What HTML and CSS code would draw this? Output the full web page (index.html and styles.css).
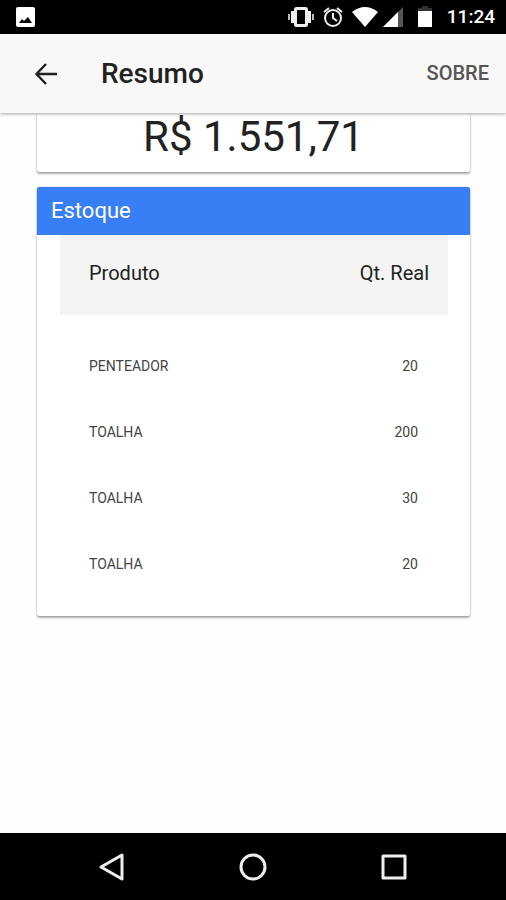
FILE: index.html
```
<!DOCTYPE html>
<html lang="pt-BR">
<head>
  <meta charset="UTF-8" />
  <meta name="viewport" content="width=device-width, initial-scale=1" />
  <title>Resumo</title>
  <link rel="stylesheet" href="styles.css">
</head>
<body>
  <div class="status-bar">
    <svg class="picture" width="20" height="20" viewBox="0 0 20 20">
      <rect width="19" height="20" rx="2" fill="#fff"/>
      <path d="M3 16l3-4 2 2 4-4 4 6z" fill="#000"/>
    </svg>
    <div class="status-icons">
      <svg width="26" height="20" viewBox="0 0 26 20" fill="none" stroke="#eee" stroke-width="2">
        <rect x="7.5" y="1.5" width="11" height="17" rx="1" stroke-width="3"/>
        <path d="M4.5 4v12M21.5 4v12" stroke-width="3"/>
        <path d="M1 7v6M25 7v6" stroke="#bbb"/>
      </svg>
      <svg class="alarm" width="20" height="20" viewBox="0 0 20 20" fill="none" stroke="#eee" stroke-width="2">
        <circle cx="10" cy="11" r="8"/>
        <path d="M1 5l5-4M19 5l-5-4M10 6v5l4 3"/>
      </svg>
      <svg class="wifi" width="26" height="20" viewBox="0 0 26 20" fill="#fff">
        <path d="M0 5Q13-5 26 5L13 20z"/>
      </svg>
      <svg class="signal" width="20" height="20" viewBox="0 0 20 20">
        <path d="M0 20L20 0v20z" fill="#555"/>
        <path d="M0 20L15 5v15z" fill="#fff"/>
      </svg>
      <svg class="battery" width="14" height="22" viewBox="0 0 14 22">
        <path d="M4 0h6v2h4v4H0V2h4z" fill="#333"/>
        <path d="M0 5h14v16H0z" fill="#fff"/>
      </svg>
      <span class="clock">11:24</span>
    </div>
  </div>

  <header class="toolbar">
    <button type="button" class="back" aria-label="Voltar">
      <svg width="24" height="24" viewBox="0 0 24 24" fill="none" stroke="#222" stroke-width="2.4">
        <path d="M23 12H3M12 2L2.500 12l9.500 10"/>
      </svg>
    </button>
    <h1>Resumo</h1>
    <button type="button" class="about">SOBRE</button>
  </header>

  <main class="content">
    <section class="card total">R$ 1.551,71</section>

    <section class="card stock">
      <h2>Estoque</h2>
      <div class="card-body">
        <table>
          <thead>
            <tr><th>Produto</th><th class="qty">Qt. Real</th></tr>
          </thead>
          <tbody>
            <tr><td>PENTEADOR</td><td class="qty">20</td></tr>
            <tr><td>TOALHA</td><td class="qty">200</td></tr>
            <tr><td>TOALHA</td><td class="qty">30</td></tr>
            <tr><td>TOALHA</td><td class="qty">20</td></tr>
          </tbody>
        </table>
      </div>
    </section>
  </main>

  <nav class="nav-bar">
    <button type="button" aria-label="Voltar">
      <svg width="28" height="28" viewBox="0 0 28 28" fill="none" stroke="#eee" stroke-width="3" stroke-linejoin="round">
        <path d="M24 2v24L3 14z"/>
      </svg>
    </button>
    <button type="button" aria-label="Início">
      <svg width="28" height="28" viewBox="0 0 28 28" fill="none" stroke="#eee" stroke-width="3">
        <circle cx="14" cy="14" r="12"/>
      </svg>
    </button>
    <button type="button" aria-label="Recentes">
      <svg width="28" height="28" viewBox="0 0 28 28" fill="none" stroke="#eee" stroke-width="3" stroke-linejoin="round">
        <rect x="3" y="3" width="22" height="22"/>
      </svg>
    </button>
  </nav>
</body>
</html>
```

FILE: styles.css
```
* {
  box-sizing: border-box;
}
body {
  display: flex;
  flex-direction: column;
  height: 100vh;
  margin: 0;
  font-family: Roboto, sans-serif;
  background: #fefefe;
  color: #222;
}
svg {
  display: block;
}
button {
  padding: 0;
  border: none;
  background: none;
  font-family: inherit;
  cursor: pointer;
}
.status-bar {
  display: flex;
  flex-shrink: 0;
  justify-content: space-between;
  align-items: center;
  height: 34px;
  padding: 0 11px 0 16px;
  background: #000;
}
.status-icons {
  display: flex;
  align-items: center;
}
.alarm,
.wifi {
  margin-left: 9px;
}
.signal {
  margin-left: 5px;
}
.battery,
.clock {
  margin-left: 15px;
}
.clock {
  font-size: 19px;
  font-weight: 500;
  line-height: 24px;
  color: #fff;
}
.toolbar {
  position: relative;
  display: flex;
  flex-shrink: 0;
  align-items: center;
  height: 79px;
  padding: 0 17px 0 34px;
  background: #f8f8f8;
  box-shadow: 0 1px 3px rgba(0, 0, 0, 0.35);
}
.toolbar h1 {
  flex: 1;
  margin: 0 0 0 43px;
  font-size: 28px;
  font-weight: 500;
  line-height: 32px;
}
.about {
  padding-bottom: 2px;
  font-size: 20px;
  font-weight: 500;
  line-height: 24px;
  color: #555;
}
.content {
  flex: 1;
  padding: 0 36px 0 37px;
  overflow: hidden;
}
.card {
  background: #fff;
  border-radius: 2px;
  box-shadow: 0 2px 2px rgba(0, 0, 0, 0.3), 0 0 2px rgba(0, 0, 0, 0.25);
}
.total {
  margin-bottom: 15px;
  padding-bottom: 11px;
  font-size: 42px;
  line-height: 48px;
  text-align: center;
}
.stock h2 {
  margin: 0;
  padding: 0 14px;
  border-radius: 2px 2px 0 0;
  font-size: 22px;
  font-weight: 400;
  line-height: 48px;
  background: #387ef5;
  color: #fff;
}
.card-body {
  padding: 0 22px 20px 23px;
}
table {
  width: 100%;
  border-collapse: collapse;
}
thead {
  background: #f4f4f4;
}
th {
  height: 80px;
  padding: 0 19px 4px 29px;
  font-size: 20px;
  font-weight: 400;
  text-align: left;
}
/* gap between the header row and the products */
tbody::before {
  content: "";
  display: block;
  height: 17px;
}
td {
  height: 66px;
  padding: 2px 30px 0 29px;
  font-size: 14px;
  color: #444;
}
.qty {
  text-align: right;
}
.nav-bar {
  display: flex;
  flex-shrink: 0;
  justify-content: space-around;
  align-items: center;
  height: 67px;
  padding: 0 42px;
  background: #000;
}
```
